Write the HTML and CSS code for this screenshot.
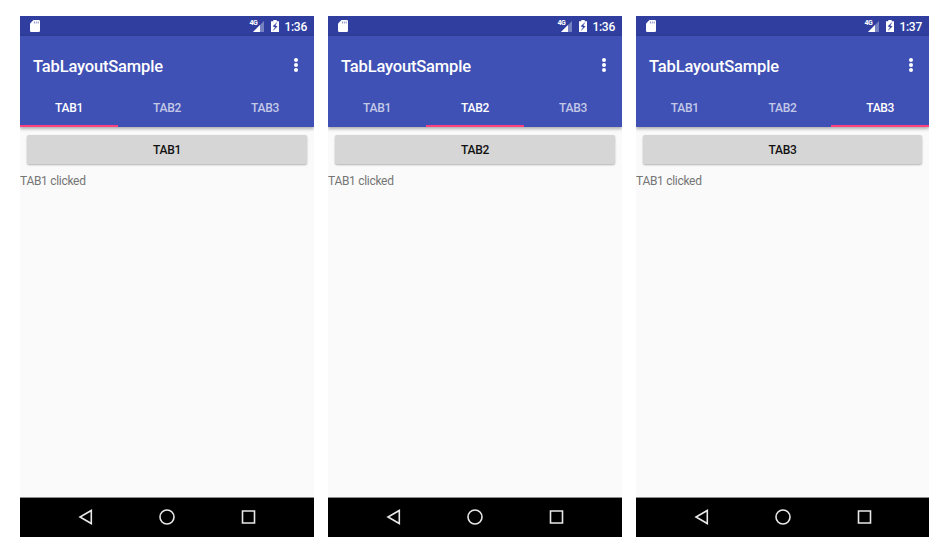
FILE: index.html
```
<!DOCTYPE html>
<html lang="en">
<head>
<meta charset="utf-8">
<title>TabLayoutSample</title>
<link rel="stylesheet" href="styles.css">
</head>
<body>
<svg class="defs" width="0" height="0">
  <symbol id="sd" viewBox="0 0 10 12"><path d="M3.5 0h5.3q1.2 0 1.2 1.2v9.6q0 1.2-1.2 1.2H1.2Q0 12 0 10.8V3.5z" fill="#fff"/><path d="M4.4 1.5v2M6.3 1.5v2M8.2 1.5v2" stroke="#7b86c6" stroke-width=".9"/></symbol>
  <symbol id="signal" viewBox="0 0 11 11"><path d="M11 0v11H0z" fill="#7580c1"/><path d="M7 4v7H0z" fill="#fff"/></symbol>
  <symbol id="battery" viewBox="0 0 8 12"><path d="M2.3 0h3.4v1.2H8V12H0V1.2h2.3z" fill="#fff"/><path d="M5.9 2.6 1.9 6.3l2.4 1-2.2 3.1L6.3 6.6l-2.2-1z" fill="#303f9f" stroke="#303f9f" stroke-width=".3"/></symbol>
  <symbol id="back" viewBox="0 0 16 16"><path d="M13.3 1.5v13L2 8z"/></symbol>
  <symbol id="home" viewBox="0 0 16 16"><circle cx="8" cy="8" r="7"/></symbol>
  <symbol id="recent" viewBox="0 0 16 16"><path d="M2.5 2h12v12h-12z"/></symbol>
</svg>
<main class="screens">
  <section class="phone">
    <div class="status"><svg class="sd"><use href="#sd"/></svg><span class="network">4G</span><svg class="signal"><use href="#signal"/></svg><svg class="battery"><use href="#battery"/></svg><span class="time">1:36</span></div>
    <header class="appbar"><div class="toolbar"><h1>TabLayoutSample</h1><span class="more"><i></i><i></i><i></i></span></div>
    <nav class="tabs"><span class="tab active">TAB1</span><span class="tab">TAB2</span><span class="tab">TAB3</span></nav></header>
    <div class="content"><button>TAB1</button><p>TAB1 clicked</p></div>
    <footer class="navigation"><svg><use href="#back"/></svg><svg><use href="#home"/></svg><svg><use href="#recent"/></svg></footer>
  </section>
  <section class="phone">
    <div class="status"><svg class="sd"><use href="#sd"/></svg><span class="network">4G</span><svg class="signal"><use href="#signal"/></svg><svg class="battery"><use href="#battery"/></svg><span class="time">1:36</span></div>
    <header class="appbar"><div class="toolbar"><h1>TabLayoutSample</h1><span class="more"><i></i><i></i><i></i></span></div>
    <nav class="tabs"><span class="tab">TAB1</span><span class="tab active">TAB2</span><span class="tab">TAB3</span></nav></header>
    <div class="content"><button>TAB2</button><p>TAB1 clicked</p></div>
    <footer class="navigation"><svg><use href="#back"/></svg><svg><use href="#home"/></svg><svg><use href="#recent"/></svg></footer>
  </section>
  <section class="phone">
    <div class="status"><svg class="sd"><use href="#sd"/></svg><span class="network">4G</span><svg class="signal"><use href="#signal"/></svg><svg class="battery"><use href="#battery"/></svg><span class="time">1:37</span></div>
    <header class="appbar"><div class="toolbar"><h1>TabLayoutSample</h1><span class="more"><i></i><i></i><i></i></span></div>
    <nav class="tabs"><span class="tab">TAB1</span><span class="tab">TAB2</span><span class="tab active">TAB3</span></nav></header>
    <div class="content"><button>TAB3</button><p>TAB1 clicked</p></div>
    <footer class="navigation"><svg><use href="#back"/></svg><svg><use href="#home"/></svg><svg><use href="#recent"/></svg></footer>
  </section>
</main>
</body>
</html>
```
FILE: styles.css
```
* { box-sizing: border-box; }
body { margin: 0; background: #fff; font-family: Roboto, sans-serif; }
.defs { display: block; }
.screens { display: grid; grid-template-columns: 294px 294px 293px; gap: 14px; padding: 16px 12px 21px 20px; }
.phone { height: 521px; display: flex; flex-direction: column; background: #fafafa; overflow: hidden; }
.status { height: 20px; flex-shrink: 0; display: flex; align-items: center; background: linear-gradient(#303f9f 17px, #2d3b94 20px); color: #fff; padding: 0 7px 0 10px; }
.sd { width: 10px; height: 12px; margin-right: auto; }
.network { font-size: 7px; line-height: 8px; font-weight: 700; letter-spacing: -.5px; margin-bottom: 6px; }
.signal { width: 11px; height: 11px; margin: 1px 0 0 -4px; }
.battery { width: 8px; height: 12px; margin: 0 5px 0 7px; }
.time { font-size: 12px; line-height: 20px; font-weight: 500; letter-spacing: -.25px; padding-top: 2px; }
.appbar { height: 91px; flex-shrink: 0; background: #3f51b5; color: #fff; box-shadow: 0 2px 3px rgba(0,0,0,.3); clip-path: inset(0 0 -6px); }
.toolbar { height: 52px; padding: 8px 16px 0 13px; display: flex; align-items: center; justify-content: space-between; }
h1 { font-size: 16.5px; line-height: 24px; font-weight: 500; letter-spacing: -.17px; margin: 1px 0 0; }
.more { display: grid; gap: 1px; margin-top: -2px; }
.more i { width: 4px; height: 4px; border-radius: 50%; background: #fff; }
.tabs { height: 39px; display: grid; grid-template-columns: repeat(3, 1fr); }
.tab { display: flex; align-items: center; justify-content: center; padding-top: 3px; font-size: 12px; font-weight: 500; letter-spacing: -.3px; color: rgba(255,255,255,.7); border-bottom: 2px solid transparent; }
.tab.active { color: #fff; border-color: #ff4081; }
.content { flex: 1; }
.content button { display: block; width: calc(100% - 14px); height: 29px; margin: 8px 7px 0; padding: 0; background: #d6d6d6; border: 0; border-radius: 2px; box-shadow: 0 1px 2px rgba(0,0,0,.3); font: 500 12px/30px Roboto, sans-serif; letter-spacing: -.3px; color: #111; }
.content p { margin: 9px 0 0; color: #757575; font-size: 12px; line-height: 16px; letter-spacing: -.3px; }
.navigation { height: 40px; flex-shrink: 0; display: flex; align-items: center; justify-content: center; gap: 65px; padding-bottom: 1px; background: #000; border-top: 1px solid #8c8c8c; }
.navigation svg { width: 16px; height: 16px; fill: none; stroke: #e8e8e8; stroke-width: 1.6; }
```
